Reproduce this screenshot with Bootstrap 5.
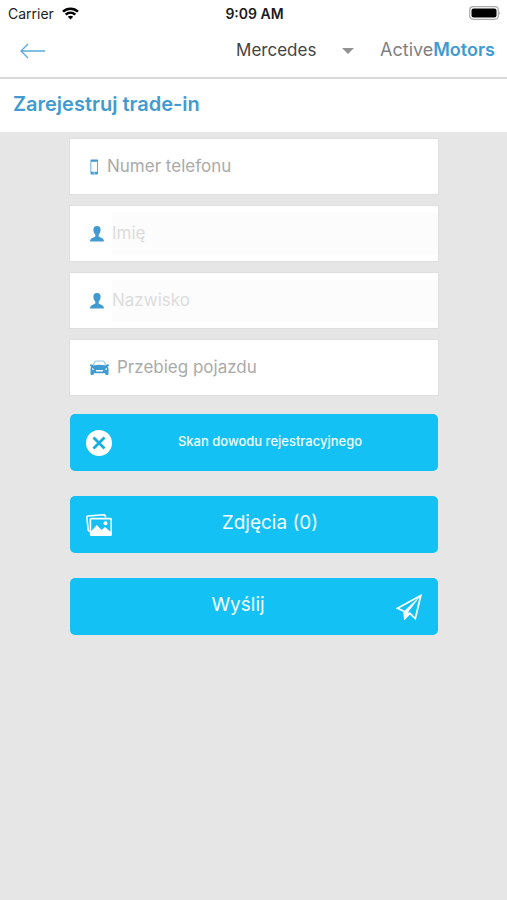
<!DOCTYPE html>
<html lang="pl">
<head>
<meta charset="utf-8">
<meta name="viewport" content="width=device-width, initial-scale=1">
<title>ActiveMotors – Zarejestruj trade-in</title>
<link href="https://cdn.jsdelivr.net/npm/bootstrap@5.3.0/dist/css/bootstrap.min.css" rel="stylesheet">
<style>
body { font-family: Inter, "Liberation Sans", sans-serif; background: #e6e6e6; color: #444; }
svg { display: block; flex: none; }
.status-bar { display: grid; grid-template-columns: 1fr auto 1fr; height: 28px; padding: 0 6px 2px 8px; font-size: 14px; color: #1c1c1c; }
.clock { font-weight: 600; }
.top-nav { height: 51px; padding: 0 12px 4px 20px; border-bottom: 2px solid #d9d9d9; }
.brand-select { width: 120px; font-size: 17px; color: #444; appearance: none; background: transparent; border: 0; padding: 0; }
.brand-caret { width: 12px; margin-left: -14px; pointer-events: none; }
.logo { font-size: 18px; line-height: 24px; color: #808080; margin-left: 26px; padding-bottom: 2px; }
.logo b, .page-title { color: #429bd0; font-weight: 600; }
.page-title { font-size: 20px; line-height: 24px; padding: 13px 13px 16px; }
.trade-form { padding: 7px 69px 0 70px; }
.field { height: 55px; padding-left: 20px; margin-bottom: 12px; background: #fff; outline: 1px solid #dfdfdf; color: #429bd0; gap: 8px; overflow: hidden; }
.field input { border: 0; padding: 0 0 1px; height: 42px; font-size: 17px; color: #444; background: transparent; outline-offset: -1px; }
.field input::placeholder { color: #aaa; opacity: 1; }
.field input:disabled { background: #fcfcfc; }
.field input:disabled::placeholder { color: #dcdcdc; }
.action { height: 57px; padding: 0 16px; margin-bottom: 25px; border: 0; border-radius: 5px; background: #14c1f5; color: #f0fcff; font-size: 19px; }
.action:hover { background: #0fb3e5; color: #fff; }
.action-label { padding: 0 10px 2px 16px; }
.submit-label { padding: 0 16px 2px 10px; }
.first-action { margin-top: 19px; }
.small-label { font-size: 13px; font-weight: 500; }
</style>
<script src="https://cdn.jsdelivr.net/npm/bootstrap@5.3.0/dist/js/bootstrap.bundle.min.js"></script>
</head>
<body>
<header class="bg-white">
  <div class="status-bar align-items-center">
    <div class="d-flex align-items-center gap-2">
      <span>Carrier</span>
      <svg width="17" height="13" viewBox="0 0 17 13" fill="none" stroke="#000" stroke-width="2.500" aria-hidden="true"><path d="M1 4.700C5.200.6 11.800.6 16 4.700M3.700 7.700C6.500 5 10.500 5 13.300 7.700"/><path d="M5.800 9.800Q8.500 7.600 11.200 9.800L8.500 12.500Z" fill="#000" stroke="none"/></svg>
    </div>
    <span class="clock">9:09 AM</span>
    <svg class="ms-auto" width="32" height="14" viewBox="0 0 32 14" aria-hidden="true"><rect x=".7" y=".7" width="28.600" height="12.600" rx="3.500" fill="#fff" stroke="#aaa" stroke-width="1.200"/><rect x="2.500" y="2.500" width="25" height="9" rx="2" fill="#000"/><path d="M30.500 5q1.500 2 0 4Z" fill="#888"/></svg>
  </div>
  <nav class="top-nav d-flex align-items-center">
    <a href="#" aria-label="Wstecz"><svg width="26" height="16" viewBox="0 0 26 16" fill="none" stroke="#5aaada" stroke-width="1.300"><path d="M25 8H1M8 1L1 8l7 7"/></svg></a>
    <select class="brand-select ms-auto" aria-label="Marka"><option>Mercedes</option></select>
    <svg class="brand-caret" height="6" viewBox="0 0 12 6" aria-hidden="true"><path d="M0 0h12L6 6Z" fill="#929292"/></svg>
    <span class="logo">Active<b>Motors</b></span>
  </nav>
  <h1 class="page-title m-0">Zarejestruj trade-in</h1>
</header>
<main>
  <form class="trade-form">
    <label class="field d-flex align-items-center">
      <svg width="9" height="16" viewBox="0 0 9 16" aria-hidden="true"><path fill="currentColor" fill-rule="evenodd" d="M1.500.5h5.500Q8 .5 8 1.500v13q0 1-1 1H1.500q-1 0-1-1v-13q0-1 1-1ZM1.300 2.700v10h5.900v-10ZM3.600 13.600v1h1.400v-1Z"/></svg>
      <input class="flex-grow-1 w-100" type="tel" placeholder="Numer telefonu" aria-label="Numer telefonu">
    </label>
    <label class="field d-flex align-items-center">
      <svg width="14" height="16" viewBox="0 0 14 16" aria-hidden="true"><path fill="currentColor" d="M7 0C9.600 0 10.800 1.500 10.600 4.300 10.500 6.300 9.700 7.600 8.700 8.500V10.500C9.700 11.500 14 11.700 14 15.500H0C0 11.700 4.300 11.500 5.300 10.500V8.500C4.300 7.600 3.500 6.300 3.400 4.300 3.200 1.500 4.400 0 7 0Z"/></svg>
      <input class="flex-grow-1 w-100" type="text" placeholder="Imię" aria-label="Imię" disabled>
    </label>
    <label class="field d-flex align-items-center">
      <svg width="14" height="16" viewBox="0 0 14 16" aria-hidden="true"><path fill="currentColor" d="M7 0C9.600 0 10.800 1.500 10.600 4.300 10.500 6.300 9.700 7.600 8.700 8.500V10.500C9.700 11.500 14 11.700 14 15.500H0C0 11.700 4.300 11.500 5.300 10.500V8.500C4.300 7.600 3.500 6.300 3.400 4.300 3.200 1.500 4.400 0 7 0Z"/></svg>
      <input class="flex-grow-1 w-100" type="text" placeholder="Nazwisko" aria-label="Nazwisko" disabled>
    </label>
    <label class="field d-flex align-items-center">
      <svg width="19" height="15" viewBox="0 0 20 15" preserveAspectRatio="none" aria-hidden="true"><path d="M3 6L5 2Q5.500 1 7 1h6q1.500 0 2 1l2 4" fill="none" stroke="#8fc8e6" stroke-width="1.200"/><path fill="currentColor" fill-rule="evenodd" d="M0 4.500h2.500L3.500 5.500q6.500-1.500 13 0l1-1H20v1.200l-1.500.8Q19.500 7.500 19.500 9v5q0 1-1 1h-1.500q-1 0-1-1v-.8H4v.8q0 1-1 1H1.500q-1 0-1-1V9Q.5 7.500 1.500 6.500L0 5.700ZM2 8l.3 1.500L4.500 10Q4 8.300 2 8Zm16 0q-2 .3-2.500 2l2.200-.5ZM6 10l.8 1.500h6.400L14 10Z"/></svg>
      <input class="flex-grow-1 w-100" type="text" inputmode="numeric" placeholder="Przebieg pojazdu" aria-label="Przebieg pojazdu">
    </label>
    <button type="button" class="btn action first-action d-flex align-items-center w-100">
      <svg width="26" height="26" viewBox="0 0 26 26" aria-hidden="true"><circle cx="13" cy="13" r="13" fill="#fff"/><path d="M7.500 7.500l11 11M18.500 7.500l-11 11" stroke="#14afe0" stroke-width="2.800"/></svg>
      <span class="action-label small-label flex-grow-1 text-center">Skan dowodu rejestracyjnego</span>
    </button>
    <button type="button" class="btn action d-flex align-items-center w-100">
      <svg width="26" height="22" viewBox="0 0 26 22" aria-hidden="true"><path d="M3.500 17.500L2.300 16.300.8 3.300Q.7 2.200 1.800 2L18 .8q1.200 0 1.400 1.200v1.500" fill="none" stroke="#fff" stroke-width="1.600"/><path fill="#fff" fill-rule="evenodd" d="M5.200 3.800h19.300q1.500 0 1.500 1.500v15.200q0 1.500-1.500 1.500H5.300q-1.400 0-1.500-1.500L3.500 5.500q0-1.600 1.700-1.700ZM5.200 5.400v11.800l5.600-6.300 4.700 5 3.500-2.800 5.400 4.700V5.400Z"/><circle cx="19.500" cy="9.300" r="2" fill="#fff"/></svg>
      <span class="action-label flex-grow-1 text-center">Zdjęcia (0)</span>
    </button>
    <button type="submit" class="btn action d-flex align-items-center w-100">
      <span class="submit-label flex-grow-1 text-center">Wyślij</span>
      <svg width="26" height="26" viewBox="0 0 26 26" aria-hidden="true"><path d="M1.500 14.200L24.800 1.500 19.300 24.500 13.800 19.300 8.800 24.500 8 17.300Z" fill="none" stroke="#fff" stroke-width="1.700"/><path d="M8 17.300L24.800 1.500 12 18.200 13.800 19.300 8.800 24.500Z" fill="#fff"/></svg>
    </button>
  </form>
</main>
</body>
</html>
